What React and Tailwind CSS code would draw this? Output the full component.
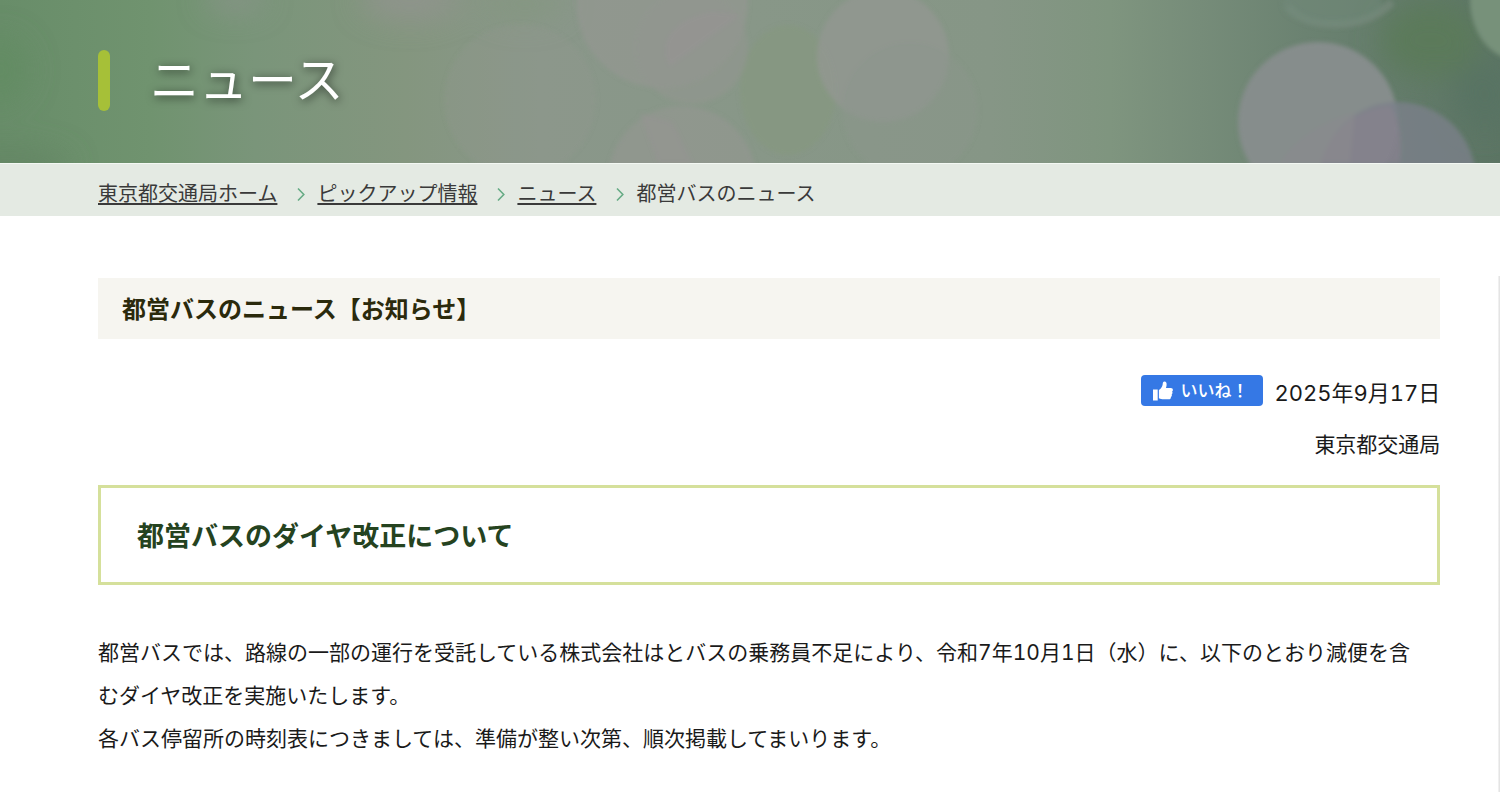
const crumbs = [
  { label: "東京都交通局ホーム", href: "#home" },
  { label: "ピックアップ情報", href: "#pickup" },
  { label: "ニュース", href: "#news" },
];

const HeroBackground = () => (
  <svg
    className="absolute inset-0 h-full w-full"
    viewBox="0 0 1500 163"
    preserveAspectRatio="xMidYMid slice"
    aria-hidden="true"
  >
    <defs>
      <linearGradient id="base" x1="0" y1="0" x2="1" y2="0">
        <stop offset="0" stopColor="#688d69" />
        <stop offset="0.1" stopColor="#70936f" />
        <stop offset="0.17" stopColor="#7a957a" />
        <stop offset="0.27" stopColor="#84967f" />
        <stop offset="0.36" stopColor="#8a978a" />
        <stop offset="0.5" stopColor="#889788" />
        <stop offset="0.66" stopColor="#869686" />
        <stop offset="0.74" stopColor="#7f957f" />
        <stop offset="0.8" stopColor="#768c79" />
        <stop offset="0.87" stopColor="#6b8271" />
        <stop offset="1" stopColor="#5c7564" />
      </linearGradient>
      <filter id="soft" x="-60%" y="-60%" width="220%" height="220%">
        <feGaussianBlur stdDeviation="14" />
      </filter>
      <filter id="edge" x="-10%" y="-10%" width="120%" height="120%">
        <feGaussianBlur stdDeviation="2" />
      </filter>
    </defs>
    <rect width="1500" height="163" fill="url(#base)" />

    {/* broad patches of colour */}
    <g filter="url(#soft)">
      <ellipse cx="0" cy="70" rx="30" ry="35" fill="#5f8c5f" opacity="0.6" />
      <ellipse cx="10" cy="165" rx="60" ry="18" fill="#628362" opacity="0.7" />
      <ellipse cx="235" cy="0" rx="30" ry="12" fill="#8b948b" opacity="0.8" />
      <ellipse cx="410" cy="0" rx="50" ry="20" fill="#91948f" opacity="0.8" />
      <ellipse cx="525" cy="4" rx="40" ry="16" fill="#84977f" opacity="0.8" />
      <ellipse cx="1430" cy="40" rx="50" ry="38" fill="#5b7a5a" opacity="0.9" />
      <ellipse cx="1485" cy="95" rx="30" ry="35" fill="#587363" />
    </g>

    {/* pale bokeh */}
    <g filter="url(#edge)">
      <circle cx="520" cy="100" r="76" fill="#93978f" opacity="0.3" />
      <ellipse cx="788" cy="90" rx="48" ry="65" fill="#86977f" opacity="0.6" />
      <circle cx="662" cy="2" r="86" fill="#929790" opacity="0.8" />
      <circle cx="692" cy="48" r="56" fill="#949692" opacity="0.5" />
      <circle cx="682" cy="180" r="74" fill="#939790" opacity="0.7" />
      <circle cx="883" cy="56" r="66" fill="#919790" opacity="0.9" />
      <circle cx="910" cy="110" r="68" fill="#8c978c" opacity="0.4" />
      <path d="M640 113L672 122L692 163L658 163Z" fill="#979494" opacity="0.5" />
      <path d="M670 66C658 45 670 20 712 12L740 15L708 38Z" fill="#979493" opacity="0.5" />
    </g>

    {/* bright rings on the right */}
    <g filter="url(#edge)">
      <path d="M1288 6Q1302 25 1338 24Q1372 23 1392 2" fill="none" stroke="#829086" strokeWidth="8" opacity="0.5" />
      <ellipse cx="1332" cy="4" rx="50" ry="22" fill="#70897a" opacity="0.5" />
      <ellipse cx="1518" cy="0" rx="48" ry="60" fill="#77917a" />
    </g>
    <g filter="url(#edge)">
      <ellipse cx="1318" cy="122" rx="80" ry="80" fill="#868d8c" />
      <circle cx="1398" cy="180" r="78" fill="#7b7f8a" opacity="0.8" />
      <path d="M1320 163Q1340 110 1390 106Q1404 125 1400 163Z" fill="#88828d" opacity="0.7" />
      <path d="M1280 163Q1302 128 1355 112L1350 163Z" fill="#8a8a8d" opacity="0.6" />
    </g>
  </svg>
);

const Chevron = () => (
  <svg
    className="h-4 w-2 shrink-0 text-[#66ab85]"
    viewBox="0 0 8 16"
    fill="none"
    stroke="currentColor"
    strokeWidth="1.6"
    aria-hidden="true"
  >
    <path d="M1 2.5L6.8 8.5L1 14.5" />
  </svg>
);

const ThumbIcon = () => (
  <svg className="size-5" viewBox="0 0 20 20" fill="currentColor" aria-hidden="true">
    <path d="M0 8.5H4.7V19.5H0Z" />
    <path d="M5.9 9C8 7.6 9.4 5.6 9.7 3.2C9.8 1.6 10.2 0.6 11.4 0.6C13.2 0.6 13.8 2.2 13.6 4C13.5 5.2 13.2 6.2 12.9 7.1H17.8C19.2 7.1 20 8 19.9 9.2C19.8 9.9 19.5 10.3 19.1 10.6C19.8 11.5 19.6 12.8 18.7 13.4C19.1 14.4 18.8 15.4 17.9 15.9C18.1 17.4 17.2 18.3 15.7 18.3H10.6C8.8 18.3 7.6 17.8 5.9 17.2Z" />
  </svg>
);

const Breadcrumb = () => (
  <nav
    aria-label="パンくずリスト"
    className="border-t border-[#f3f8f3] bg-[#e4eae3] pb-2 pl-[98px] pr-15 pt-4 text-[20px] leading-7 text-[#3a3a3a]"
  >
    <ol className="flex flex-wrap items-center">
      {crumbs.map((crumb) => (
        <li key={crumb.label} className="flex items-center">
          <a href={crumb.href} className="underline decoration-2 underline-offset-2">
            {crumb.label}
          </a>
          <span className="pl-5 pr-3">
            <Chevron />
          </span>
        </li>
      ))}
      <li aria-current="page">都営バスのニュース</li>
    </ol>
  </nav>
);

export default function App() {
  return (
    <div
      lang="ja"
      className="flex min-h-screen flex-col bg-white font-['Inter','Noto_Sans_CJK_JP',sans-serif] text-[#1a1a1a] tabular-nums"
    >
      <header className="relative h-[163px] overflow-hidden pl-[98px] pt-[50px]">
        <HeroBackground />
        <div className="relative flex items-center gap-10">
          <span className="h-[61px] w-3 rounded-full bg-[#a6c038]" />
          <h1 className="text-[49px] leading-[60px] text-white [text-shadow:1px_2px_10px_rgba(0,0,0,0.6)]">
            ニュース
          </h1>
        </div>
      </header>

      <Breadcrumb />

      <div className="flex grow">
        <main className="min-w-0 grow pl-[98px] pr-[60px] pt-[62px]">
          <h2 className="bg-[#f6f5f0] px-6 pb-3 pt-[15px] text-[24px] font-bold leading-[34px] text-[#2b2a0c]">
            都営バスのニュース【お知らせ】
          </h2>

          <div className="mt-9 flex items-start justify-end gap-3 text-[22px] leading-9">
            <button
              type="button"
              className="flex h-[31px] w-[122px] items-center gap-2 rounded-[4px] bg-[#3578e5] pl-3 text-[17px] font-medium text-white"
            >
              <ThumbIcon />
              いいね！
            </button>
            <time dateTime="2025-09-17">2025年9月17日</time>
          </div>
          <p className="mt-4 text-right text-[21px] leading-9">東京都交通局</p>

          <h3 className="mt-[22px] border-3 border-[#d5e09b] px-9 pb-[25px] pt-[29px] text-[27px] font-bold leading-10 text-[#25431f]">
            都営バスのダイヤ改正について
          </h3>

          <p className="mt-[46px] pr-6 text-[21px] leading-[43px]">
            都営バスでは、路線の一部の運行を受託している株式会社はとバスの乗務員不足により、令和7年10月1日（水）に、以下のとおり減便を含むダイヤ改正を実施いたします。
            <br />
            各バス停留所の時刻表につきましては、準備が整い次第、順次掲載してまいります。
          </p>
        </main>
        <aside className="-ml-0.5 mt-15 w-0.5 bg-linear-to-r from-[#f6f6f6] to-[#dedede]" />
      </div>
    </div>
  );
}
